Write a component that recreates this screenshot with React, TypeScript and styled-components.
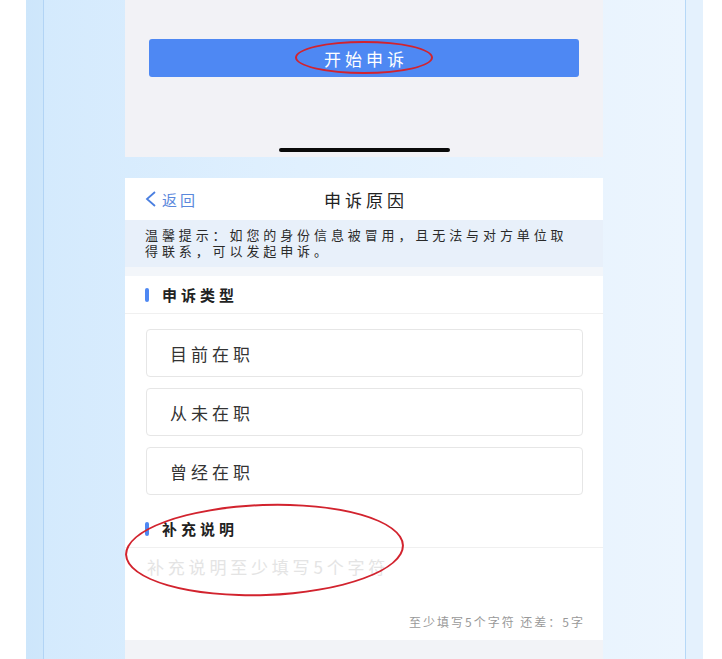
import React from "react";
import styled, { createGlobalStyle } from "styled-components";

const GlobalStyle = createGlobalStyle`
  html, body {
    margin: 0;
    padding: 0;
    background: #ffffff;
  }
  body {
    font-family: "Noto Sans CJK SC", "Noto Sans", sans-serif;
  }
`;

const reasons = ["目前在职", "从未在职", "曾经在职"];

export default function App() {
  return (
    <>
      <GlobalStyle />
      <Page>
        <Frame>
          <Inner>
            <Column>
              <TopShot>
                <StartButton>
                  开始申诉
                  <Ring $w={138} $h={33} $rotate={0} />
                </StartButton>
                <HomeBar />
              </TopShot>

              <Gap />

              <Shot>
                <Header>
                  <Back>
                    <svg width="14" height="18" viewBox="0 0 14 18">
                      <path d="M11 2 L3 9 L11 16" fill="none" stroke="#4a7fe0" strokeWidth="1.8" />
                    </svg>
                    返回
                  </Back>
                  <Title>申诉原因</Title>
                </Header>

                <Tip>温馨提示：如您的身份信息被冒用，且无法与对方单位取得联系，可以发起申诉。</Tip>
                <TipEdge />

                <Section>
                  <SectionTitle>申诉类型</SectionTitle>
                  <Options>
                    {reasons.map((r) => (
                      <Option key={r}>{r}</Option>
                    ))}
                  </Options>

                  <NoteBlock>
                    <SectionTitle>补充说明</SectionTitle>
                    <Placeholder>补充说明至少填写5个字符</Placeholder>
                    <Ring $w={279} $h={92} $rotate={-2} $left={0} $top={-6} />
                  </NoteBlock>
                  <Counter>至少填写5个字符 还差：5字</Counter>
                </Section>
                <Bottom />
              </Shot>
            </Column>
          </Inner>
        </Frame>
      </Page>
    </>
  );
}

const Page = styled.div`
  width: 722px;
  height: 659px;
  overflow: hidden;
  display: flex;
  background: #ffffff;
`;

const Frame = styled.div`
  margin-left: 26px;
  width: 677px;
  height: 100%;
  display: flex;
  padding: 0 17px 0 17px;
  box-sizing: border-box;
  background: linear-gradient(90deg, #cde6fb 0%, #cfe7fb 3%, #e4f1fd 97%, #e4f1fd 100%);
`;

const Inner = styled.div`
  flex: 1;
  display: flex;
  border-left: 1px solid #b2d4f5;
  border-right: 1px solid #b6d8f7;
  background: linear-gradient(90deg, #d4eafd 0%, #e0f0fe 40%, #ecf5fe 100%);
  padding-left: 81px;
`;

const Column = styled.div`
  width: 478px;
  display: flex;
  flex-direction: column;
  & > * {
    flex-shrink: 0;
  }
`;

const TopShot = styled.div`
  height: 157px;
  background: #f2f2f6;
  display: flex;
  flex-direction: column;
  align-items: center;
  padding-top: 39px;
  box-sizing: border-box;
`;

const StartButton = styled.div`
  position: relative;
  width: 430px;
  height: 38px;
  border-radius: 3px;
  background: #4e88f3;
  color: #ffffff;
  font-size: 17px;
  letter-spacing: 4px;
  text-indent: 4px;
  display: flex;
  align-items: center;
  justify-content: center;
`;

const Ring = styled.span<{ $w: number; $h: number; $rotate: number; $left?: number; $top?: number }>`
  position: absolute;
  width: ${(p) => p.$w}px;
  height: ${(p) => p.$h}px;
  border: 2px solid #d2232e;
  border-radius: 50%;
  box-sizing: border-box;
  transform: rotate(${(p) => p.$rotate}deg);
  ${(p) =>
    p.$left !== undefined
      ? `left: ${p.$left}px; top: ${p.$top}px;`
      : `left: 50%; top: 50%; margin-left: -${p.$w / 2}px; margin-top: -${p.$h / 2 + 1}px;`}
  pointer-events: none;
`;

const HomeBar = styled.div`
  margin-top: 71px;
  width: 171px;
  height: 4px;
  border-radius: 2px;
  background: #0a0a0a;
`;

const Gap = styled.div`
  height: 21px;
`;

const Shot = styled.div`
  display: flex;
  flex-direction: column;
  background: #ffffff;
`;

const Header = styled.div`
  height: 42px;
  position: relative;
  display: flex;
  align-items: center;
  justify-content: center;
  background: #ffffff;
`;

const Back = styled.div`
  position: absolute;
  left: 19px;
  top: 0;
  bottom: 0;
  display: flex;
  align-items: center;
  gap: 4px;
  color: #5a88dc;
  font-size: 15px;
  letter-spacing: 3px;
`;

const Title = styled.div`
  font-size: 17px;
  color: #222;
  letter-spacing: 4px;
  text-indent: 4px;
`;

const Tip = styled.div`
  background: #e8f0fa;
  padding: 7px 26px 8px 20px;
  font-size: 13px;
  line-height: 16px;
  color: #2a2a2a;
  letter-spacing: 3.9px;
`;

const TipEdge = styled.div`
  height: 9px;
  background: #f3f6fa;
`;

const Section = styled.div`
  display: flex;
  flex-direction: column;
`;

const SectionTitle = styled.div`
  display: flex;
  align-items: center;
  height: 38px;
  padding-left: 20px;
  font-size: 15px;
  font-weight: bold;
  color: #222;
  letter-spacing: 4px;
  border-bottom: 1px solid #f0f0f0;
  box-sizing: border-box;
  &::before {
    content: "";
    width: 4px;
    height: 14px;
    border-radius: 2px;
    background: #4e88f3;
    margin-right: 13px;
  }
`;

const Options = styled.div`
  display: flex;
  flex-direction: column;
  gap: 11px;
  padding: 15px 20px 15px 21px;
`;

const Option = styled.div`
  height: 48px;
  border: 1px solid #e6e6e6;
  border-radius: 4px;
  box-sizing: border-box;
  display: flex;
  align-items: center;
  padding-left: 23px;
  font-size: 17px;
  color: #333;
  letter-spacing: 4px;
`;

const NoteBlock = styled.div`
  position: relative;
`;

const Placeholder = styled.div`
  padding: 6px 0 0 22px;
  height: 44px;
  box-sizing: border-box;
  font-size: 17px;
  color: #e4e4e4;
  letter-spacing: 3.8px;
`;

const Counter = styled.div`
  text-align: right;
  padding: 21px 18px 10px 0;
  font-size: 12px;
  color: #999;
  letter-spacing: 2px;
`;

const Bottom = styled.div`
  height: 20px;
  background: #f2f3f7;
`;
